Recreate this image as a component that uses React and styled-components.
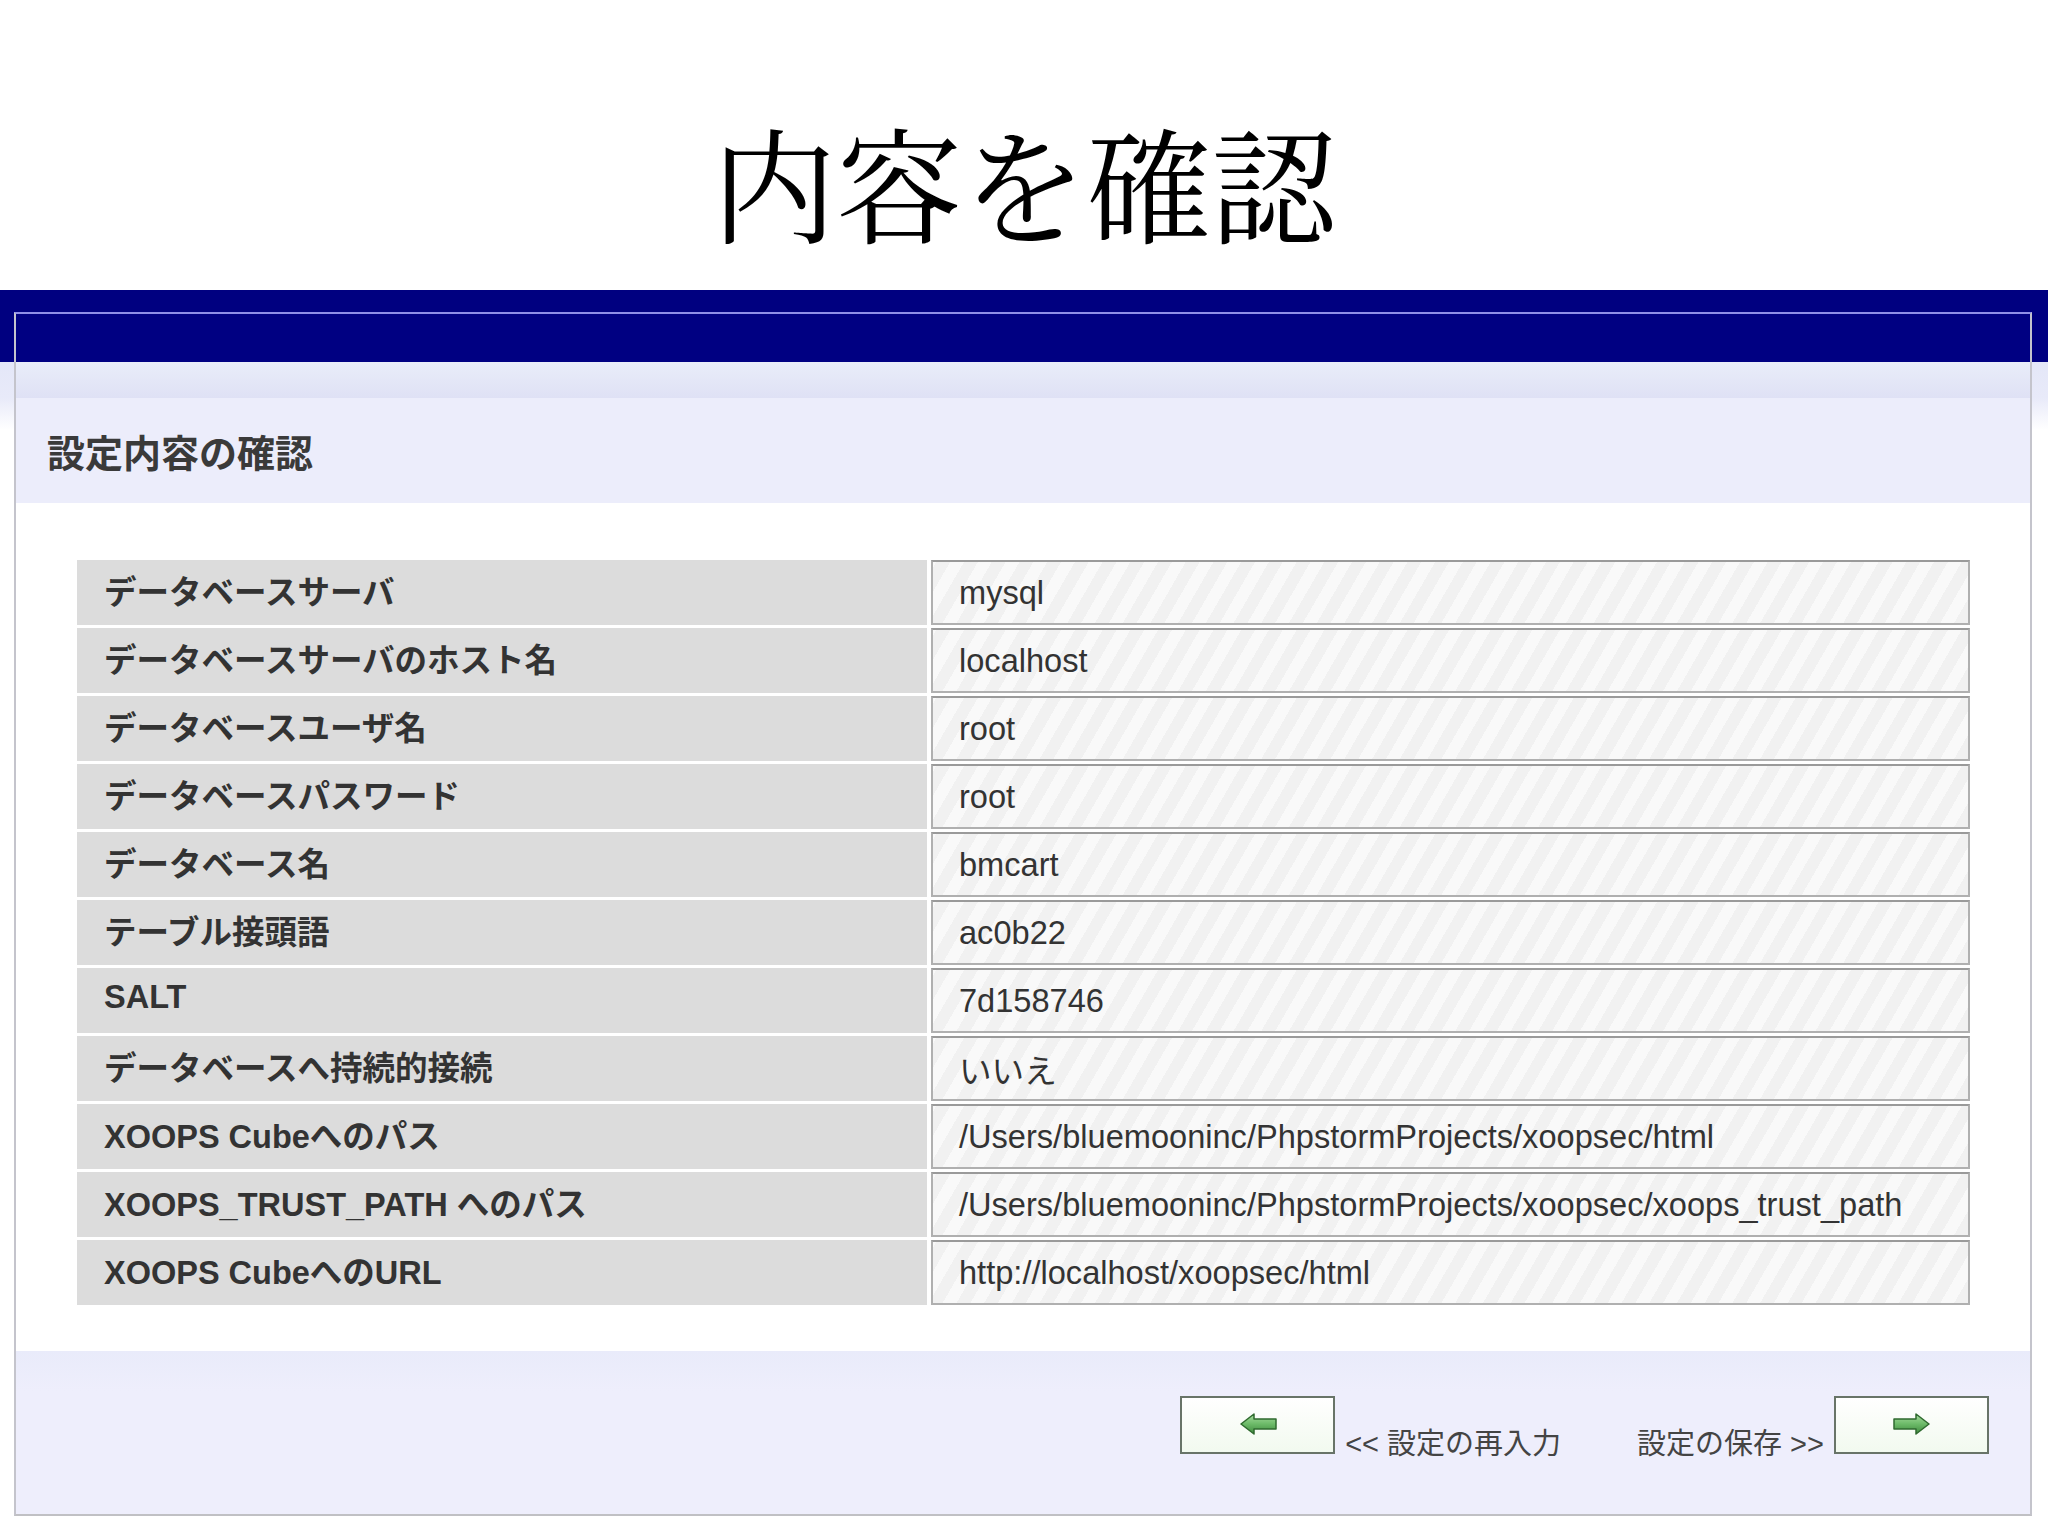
import React from 'react';
import styled, { createGlobalStyle } from 'styled-components';

const GlobalStyle = createGlobalStyle`
    body {
        margin: 0;
        background: #ffffff;
        font-family: "Liberation Sans", "Noto Sans CJK JP", sans-serif;
    }
`;

const Page = styled.div`
    width: 2048px;
    height: 1536px;
    overflow: hidden;
    background: #ffffff;
`;

const TitleBlock = styled.div`
    height: 290px;
    display: flex;
    align-items: center;
    justify-content: center;
`;

const Title = styled.h1`
    margin: 70px 0 0 0;
    font-family: "Noto Serif CJK JP", "Noto Sans CJK JP", serif;
    font-weight: 400;
    font-size: 125px;
    line-height: 1;
    color: #000000;
`;

const Stage = styled.div`
    padding: 22px 16px 0 14px;
    background: linear-gradient(
        to bottom,
        #000080 0px,
        #000080 72px,
        #e4e7f8 72px,
        #e8eaf9 108px,
        #ffffff 140px
    );
`;

const Panel = styled.div`
    border-top: 2px solid #8f8fe8;
    border-left: 2px solid #c4c4cc;
    border-right: 2px solid #c4c4cc;
    border-bottom: 2px solid #c0c0c4;
    background: #ffffff;
`;

const NavyStrip = styled.div`
    height: 48px;
    background: #000082;
`;

const FadeBand = styled.div`
    height: 36px;
    background: linear-gradient(to bottom, #e9edf9, #dfe1f5);
`;

const Heading = styled.div`
    height: 105px;
    display: flex;
    align-items: center;
    padding-left: 31px;
    background: #ecedfb;
    font-family: "Liberation Sans", "Noto Sans CJK JP", sans-serif;
    font-weight: 700;
    font-size: 38px;
    color: #3a3a3a;
`;

const Body = styled.div`
    padding: 57px 0 46px 61px;
    background: #ffffff;
`;

const Table = styled.div`
    display: grid;
    grid-template-columns: 850px 1039px;
    column-gap: 4px;
    row-gap: 3px;
`;

const Label = styled.div`
    height: 65px;
    display: flex;
    align-items: center;
    padding-left: 27px;
    padding-bottom: 6px;
    box-sizing: border-box;
    background: #dcdcdc;
    font-weight: 700;
    font-size: 32.5px;
    color: #333333;
    white-space: nowrap;
`;

const Value = styled.div`
    height: 65px;
    display: flex;
    align-items: center;
    padding-left: 26px;
    box-sizing: border-box;
    border: 2px solid #b0b0b0;
    border-top-color: #9a9a9a;
    background: repeating-linear-gradient(
        -60deg,
        #f1f1f1 0px,
        #f1f1f1 12px,
        #f9f9f9 12px,
        #f9f9f9 24px
    );
    font-size: 32.6px;
    color: #333333;
    white-space: nowrap;
`;

const Footer = styled.div`
    height: 163px;
    display: flex;
    align-items: flex-start;
    justify-content: flex-end;
    padding: 45px 41px 0 0;
    box-sizing: border-box;
    background: linear-gradient(to bottom, #e9ebfa, #eeeefc 40px, #eeeefc);
`;

const NavGroup = styled.div`
    display: flex;
    align-items: flex-end;
    gap: 10px;
    margin-left: ${(p) => p.gapLeft || 0}px;
`;

const ArrowButton = styled.button`
    width: 155px;
    height: 58px;
    display: flex;
    align-items: center;
    justify-content: center;
    padding: 0 0 3px 0;
    border: 2px solid #687468;
    background: linear-gradient(to bottom, #ffffff, #f2faef);
    cursor: pointer;
`;

const NavText = styled.span`
    font-size: 29px;
    line-height: 29px;
    color: #444444;
    margin-bottom: -5px;
    white-space: nowrap;
`;

const rows = [
    ['データベースサーバ', 'mysql'],
    ['データベースサーバのホスト名', 'localhost'],
    ['データベースユーザ名', 'root'],
    ['データベースパスワード', 'root'],
    ['データベース名', 'bmcart'],
    ['テーブル接頭語', 'ac0b22'],
    ['SALT', '7d158746'],
    ['データベースへ持続的接続', 'いいえ'],
    ['XOOPS Cubeへのパス', '/Users/bluemooninc/PhpstormProjects/xoopsec/html'],
    ['XOOPS_TRUST_PATH へのパス', '/Users/bluemooninc/PhpstormProjects/xoopsec/xoops_trust_path'],
    ['XOOPS CubeへのURL', 'http://localhost/xoopsec/html'],
];

function GreenArrow({ dir }) {
    const id = `ga-${dir}`;
    return (
        <svg width="40" height="22" viewBox="0 0 40 22">
            <defs>
                <linearGradient id={id} x1="0" y1="0" x2="0" y2="1">
                    <stop offset="0" stopColor="#a8dca0" />
                    <stop offset="0.5" stopColor="#6cba68" />
                    <stop offset="1" stopColor="#3f8a3e" />
                </linearGradient>
            </defs>
            <g transform={dir === 'left' ? 'translate(40 0) scale(-1 1)' : undefined}>
                <path
                    d="M2 6 H24 V1 L37 11 L24 21 V16 H2 Z"
                    fill={`url(#${id})`}
                    stroke="#2f6a2f"
                    strokeWidth="1.5"
                    strokeLinejoin="round"
                />
            </g>
        </svg>
    );
}

export default function App() {
    return (
        <Page>
            <GlobalStyle />
            <TitleBlock>
                <Title>内容を確認</Title>
            </TitleBlock>
            <Stage>
                <Panel>
                    <NavyStrip />
                    <FadeBand />
                    <Heading>設定内容の確認</Heading>
                    <Body>
                        <Table>
                            {rows.map(([label, value]) => (
                                <React.Fragment key={label}>
                                    <Label>{label}</Label>
                                    <Value>{value}</Value>
                                </React.Fragment>
                            ))}
                        </Table>
                    </Body>
                    <Footer>
                        <NavGroup>
                            <ArrowButton type="button">
                                <GreenArrow dir="left" />
                            </ArrowButton>
                            <NavText>&lt;&lt; 設定の再入力</NavText>
                        </NavGroup>
                        <NavGroup gapLeft={76}>
                            <NavText>設定の保存 &gt;&gt;</NavText>
                            <ArrowButton type="button">
                                <GreenArrow dir="right" />
                            </ArrowButton>
                        </NavGroup>
                    </Footer>
                </Panel>
            </Stage>
        </Page>
    );
}
